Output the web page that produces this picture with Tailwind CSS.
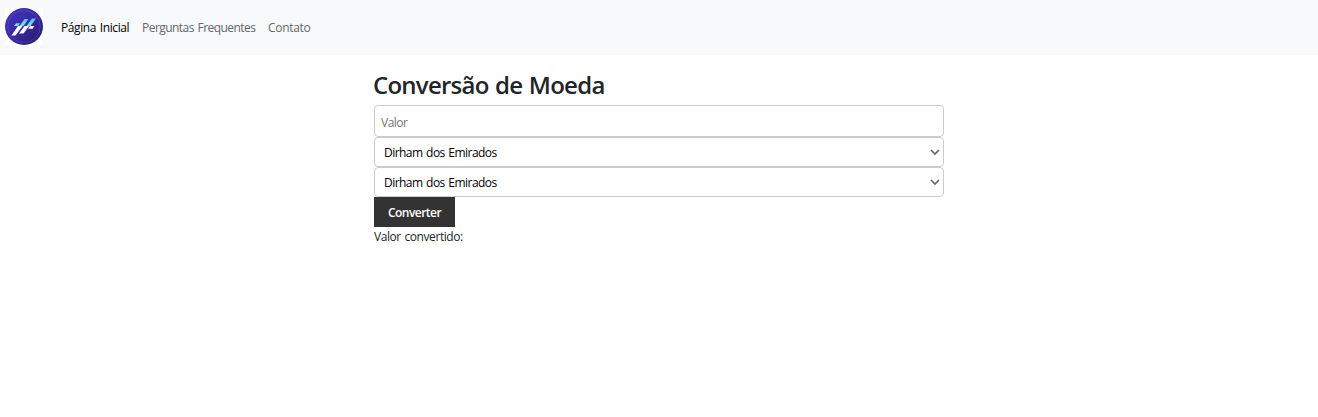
<!DOCTYPE html>
<html lang="pt-BR">
<head>
<meta charset="utf-8">
<title>Conversão de Moeda</title>
<script src="https://cdn.jsdelivr.net/npm/@tailwindcss/browser@4"></script>
</head>
<body class="bg-white text-[#212529] font-['Open_Sans',sans-serif] text-[12px] leading-[18px]">
<nav class="h-[55px] bg-[#f8f9fa] flex items-center pl-[5px] whitespace-nowrap">
  <a href="#" class="block bg-white -mt-[2px]">
    <svg class="block" width="38" height="37" viewBox="0 0 38 37">
      <defs>
        <linearGradient id="g" x1="0" y1="0" x2="1" y2="1"><stop offset="0" stop-color="#4432c4"/><stop offset=".5" stop-color="#3829a5"/><stop offset="1" stop-color="#21185f"/></linearGradient>
        <linearGradient id="s" x1="0" y1="0" x2="0" y2="1"><stop offset="0" stop-color="#5bb8ec"/><stop offset="1" stop-color="#7de0ee"/></linearGradient>
      </defs>
      <ellipse cx="19" cy="18.5" rx="19" ry="18.5" fill="url(#g)"/>
      <ellipse cx="19" cy="18.5" rx="16.3" ry="16" fill="none" stroke="#6f6bd0" stroke-opacity=".55" stroke-width=".7"/>
      <path d="M14.500 18L19.500 11H23.500L18.500 18ZM21.500 18L27 10.500H31L25.500 18ZM9 18L11 15.200H15L13 18Z" fill="url(#s)"/>
      <path d="M6.500 27.500L13 18H17.500L10.500 27.500ZM14 25.500L19.500 18H24L18.500 25.500ZM23 20.800L25 18H29.500L27.500 20.800Z" fill="#fff"/>
    </svg>
  </a>
  <div class="flex items-center ml-[18px] pt-px text-[#65676a]">
    <a href="#" class="w-[81px] text-black tracking-[-0.4px] [word-spacing:1px]">Página Inicial</a>
    <a href="#" class="w-[126px] tracking-[-0.54px] [word-spacing:1px]">Perguntas Frequentes</a>
    <a href="#" class="tracking-[-0.3px]">Contato</a>
  </div>
</nav>
<main class="w-[570px] ml-[374px] pt-[15px] flex flex-col items-start whitespace-nowrap">
  <h1 class="h-[35px] -ml-px leading-[30px] text-[24px] font-semibold tracking-[-0.75px] [word-spacing:1px]">Conversão de Moeda</h1>
  <input type="text" placeholder="Valor" class="w-full h-[32px] border border-[#ccc] rounded-[4px] px-[6px] pt-[2px] text-[12px] tracking-[-0.5px] placeholder:text-[#757575] outline-none">
  <button class="w-full h-[30px] border border-[#ccc] rounded-[4px] pl-[9px] pr-[3px] flex items-center justify-between text-black tracking-[-0.54px] [word-spacing:1px]"><span class="pt-[2px]">Dirham dos Emirados</span>
    <svg width="10" height="8" viewBox="0 0 10 8" fill="none" stroke="#666" stroke-width="1.700"><path d="M1 2L5 6L9 2"/></svg>
  </button>
  <button class="w-full h-[30px] border border-[#ccc] rounded-[4px] pl-[9px] pr-[3px] flex items-center justify-between text-black tracking-[-0.54px] [word-spacing:1px]"><span class="pt-[2px]">Dirham dos Emirados</span>
    <svg width="10" height="8" viewBox="0 0 10 8" fill="none" stroke="#666" stroke-width="1.700"><path d="M1 2L5 6L9 2"/></svg>
  </button>
  <button class="w-[81px] h-[30px] pt-[2px] bg-[#333] text-white font-semibold tracking-[-0.53px]">Converter</button>
  <p class="mt-[1px] tracking-[-0.43px] [word-spacing:1px]">Valor convertido:</p>
</main>
</body>
</html>
